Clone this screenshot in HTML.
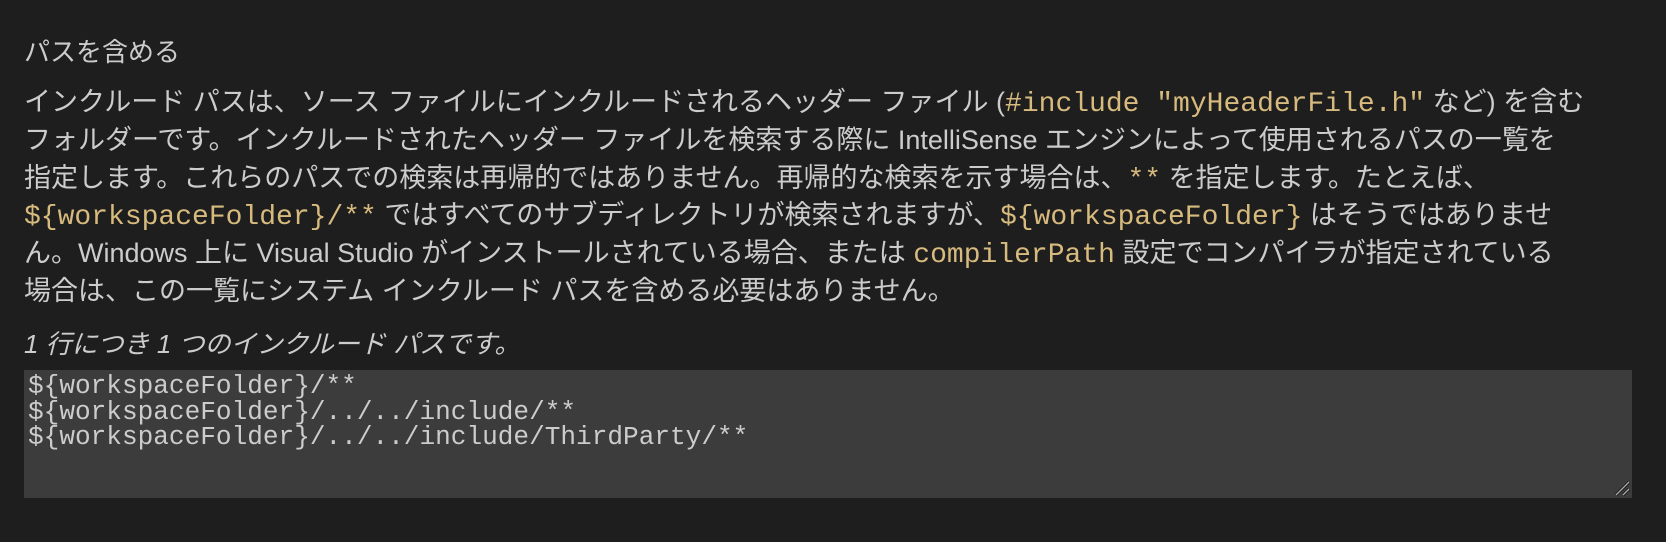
<!DOCTYPE html>
<html><head><meta charset="utf-8"><style>
html,body{margin:0;padding:0;background:#1e1e1e;width:1666px;height:542px;overflow:hidden}
body{font-family:"Liberation Sans","Noto Sans CJK JP",sans-serif;color:#cccccc;font-size:27px}
.t{position:absolute;left:24px;top:33px;line-height:38px;white-space:nowrap;font-size:26px}
.d{position:absolute;left:24px;top:84px;line-height:37.8px;white-space:nowrap}
code{font-family:"Liberation Mono","Noto Sans CJK JP",monospace;color:#d7ba7d;font-size:28px;line-height:1}
.i{position:absolute;left:24px;top:325px;line-height:38px;font-style:italic;white-space:nowrap;font-size:26px}
.ta{position:absolute;left:24px;top:370px;width:1608px;height:128px;background:#3c3c3c}
.ta pre{margin:0;position:absolute;left:4px;top:4px;font-family:"Liberation Mono",monospace;font-size:26.1px;line-height:25.5px;color:#cccccc}
.grip{position:absolute;right:2px;bottom:2px}
</style></head><body>
<div class="t">パスを含める</div>
<div class="d">インクルード パスは、ソース ファイルにインクルードされるヘッダー ファイル (<code>#include "myHeaderFile.h"</code> など) を含む<br>フォルダーです。インクルードされたヘッダー ファイルを検索する際に IntelliSense エンジンによって使用されるパスの一覧を<br>指定します。これらのパスでの検索は再帰的ではありません。再帰的な検索を示す場合は、<code>**</code> を指定します。たとえば、<br><code>${workspaceFolder}/**</code> ではすべてのサブディレクトリが検索されますが、<code>${workspaceFolder}</code> はそうではありませ<br>ん。Windows 上に Visual Studio がインストールされている場合、または <code>compilerPath</code> 設定でコンパイラが指定されている<br>場合は、この一覧にシステム インクルード パスを含める必要はありません。</div>
<div class="i">1 行につき 1 つのインクルード パスです。</div>
<div class="ta"><pre>${workspaceFolder}/**
${workspaceFolder}/../../include/**
${workspaceFolder}/../../include/ThirdParty/**</pre>
<svg class="grip" width="16" height="16" viewBox="0 0 16 16"><path d="M2 15 L15 2 M9 15 L15 9" stroke="#111" stroke-width="3"/><path d="M2 15 L15 2 M9 15 L15 9" stroke="#aaa" stroke-width="1.4"/></svg>
</div>
</body></html>
